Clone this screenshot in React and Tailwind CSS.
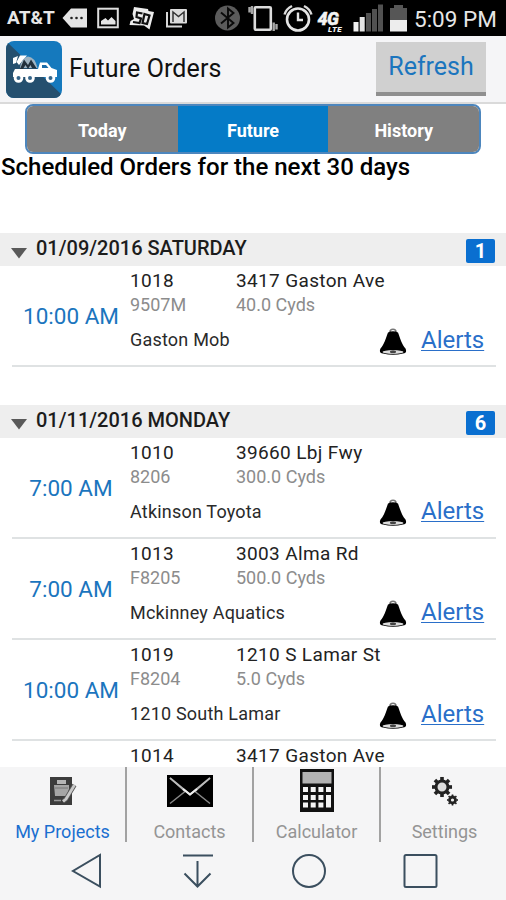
import React from 'react';

const groups = [
  {
    title: '01/09/2016 SATURDAY',
    count: 1,
    orders: [
      { id: '1018', time: '10:00 AM', address: '3417 Gaston Ave', code: '9507M', qty: '40.0 Cyds', customer: 'Gaston Mob' },
    ],
  },
  {
    title: '01/11/2016 MONDAY',
    count: 6,
    orders: [
      { id: '1010', time: '7:00 AM', address: '39660 Lbj Fwy', code: '8206', qty: '300.0 Cyds', customer: 'Atkinson Toyota' },
      { id: '1013', time: '7:00 AM', address: '3003 Alma Rd', code: 'F8205', qty: '500.0 Cyds', customer: 'Mckinney Aquatics' },
      { id: '1019', time: '10:00 AM', address: '1210 S Lamar St', code: 'F8204', qty: '5.0 Cyds', customer: '1210 South Lamar' },
      { id: '1014', address: '3417 Gaston Ave' },
    ],
  },
];

const StatusIcons = () => (
  <svg className="shrink-0" width="405" height="36" viewBox="62 0 405 36">
    {/* tag */}
    <path d="M62.500 18 L71 8.500 H87 V27.500 H71 Z" fill="#e4e4e4" />
    <g fill="#222">
      <circle cx="71.500" cy="18" r="1.300" />
      <circle cx="76.500" cy="18" r="1.300" />
      <circle cx="81.500" cy="18" r="1.300" />
    </g>
    {/* picture */}
    <rect x="98.200" y="8.700" width="19.600" height="18.600" fill="none" stroke="#dedede" strokeWidth="2" />
    <path d="M101 24.500 V21 L105.500 18 L108 20.500 L111.500 17 L115.500 21 V24.500 Z" fill="#e4e4e4" />
    {/* app badge */}
    <path d="M134 7 L148 9 L148.500 11 L154 12 L149.500 29.500 L144 25.500 L129.500 25 L130.500 21 L134 19 L132.500 14 Z" fill="#ececec" />
    <path d="M142.500 13.500 L137 12.500 L136.500 17 L141 18.500 L139.500 23 L133 22" fill="none" stroke="#111" strokeWidth="2.200" />
    <path d="M144.500 14 L149.500 15.500 L147 24 L142.500 23 Z" fill="none" stroke="#111" strokeWidth="2.200" />
    {/* mail stack */}
    <path d="M167 12 V26.500 H182" fill="none" stroke="#d8d8d8" strokeWidth="2" />
    <rect x="170" y="9" width="17" height="14.500" rx="1" fill="#dcdcdc" />
    <path d="M173 22 V12 L178.500 16.500 L184 12 V22" fill="none" stroke="#333" strokeWidth="1.500" />
    {/* bluetooth */}
    <circle cx="227.500" cy="18" r="12.500" fill="#5b5b5b" />
    <path d="M221 12.500 L233.500 23 L228 27.500 V8.500 L233.500 13 L221 23.500" fill="none" stroke="#0a0a0a" strokeWidth="1.900" />
    {/* vibrate */}
    <rect x="254.800" y="7.200" width="16" height="22.600" rx="1" fill="none" stroke="#dcdcdc" strokeWidth="2.600" />
    <path d="M249.500 7 V12.500 M252 6 V14 M273.700 22.500 V31 M276.500 24 V29.500" stroke="#a8a8a8" strokeWidth="2.400" />
    {/* alarm */}
    <circle cx="298" cy="19.500" r="11" fill="none" stroke="#e4e4e4" strokeWidth="2.600" />
    <path d="M298 12.500 V20 H303" fill="none" stroke="#e4e4e4" strokeWidth="2.400" />
    <path d="M284.500 14.500 Q286 9 292 6 M311.500 14.500 Q310 9 304 6" fill="none" stroke="#dcdcdc" strokeWidth="2.400" />
    {/* network */}
    <text x="317.500" y="25" fontSize="18" fontWeight="900" fontStyle="italic" letterSpacing="-0.500" fill="#f4f4f4" stroke="#f4f4f4" strokeWidth="0.400">4G</text>
    <text x="328" y="32" fontSize="8" fontWeight="900" fontStyle="italic" letterSpacing="0.500" fill="#f4f4f4" stroke="#000" strokeWidth="1.500" paintOrder="stroke">LTE</text>
    {/* signal */}
    <rect x="353.500" y="22" width="5" height="9.500" fill="#f0f0f0" />
    <rect x="359.700" y="17" width="5" height="14.500" fill="#e4e4e4" />
    <rect x="366" y="13" width="5" height="18.500" fill="#515151" />
    <rect x="372" y="9" width="5" height="22.500" fill="#515151" />
    <rect x="378" y="4.500" width="5" height="27" fill="#515151" />
    {/* battery */}
    <path d="M394 5 H403 V8 H407 V20 H390 V8 H394 Z" fill="#565656" />
    <rect x="390" y="20" width="17" height="11.500" fill="#ededed" />
  </svg>
);

const AppLogo = () => (
  <svg className="shrink-0" width="56" height="57" viewBox="0 0 56 57">
    <defs>
      <clipPath id="logo"><rect width="56" height="57" rx="8" /></clipPath>
    </defs>
    <g clipPath="url(#logo)">
      <rect width="56" height="57" fill="#1579bd" />
      <path d="M0 0 L56 54 V57 H0 Z" fill="#25506f" />
    </g>
    {/* chute and drum */}
    <path d="M7 17 L12 15 L10 22 L7 23 Z M14 14.500 H21 L13 24 L10.500 21 Z" fill="#fff" />
    <path d="M14 27 Q15 17 22 15.500 Q29 16 31.500 27 Z" fill="#9fb4c3" />
    <path d="M14 28 L18 18.500 L22 24 L25 18.500 L31 28 L26 27 L24.500 24 L22 28 L19.500 24 L17 28 Z" fill="#22303c" />
    {/* chassis and cab */}
    <path d="M9 28 H32 L34 21.500 H41 L45.500 27 L51 29 V36 H7 V32 Z" fill="#fff" />
    <path d="M36 27 V24 H40 L42.500 27 Z" fill="#1a6ca8" />
    <g fill="#35658a" stroke="#fff" strokeWidth="2.800">
      <circle cx="12.500" cy="37" r="3.400" />
      <circle cx="24" cy="37" r="3.400" />
      <circle cx="44.500" cy="37" r="3.400" />
    </g>
  </svg>
);

const Bell = () => (
  <svg className="mt-1" width="28" height="28" viewBox="0 0 28 28">
    <path d="M11 4 Q11 1.200 14 1.200 Q17 1.200 17 4" fill="none" stroke="#777" strokeWidth="1.600" />
    <path d="M9 4.500 Q14 1.800 19 4.500 C21 10 23 17 26.500 20.500 Q28.500 25 24 25.500 Q14 28 4 25.500 Q-0.500 25 1.500 20.500 C5 17 7 10 9 4.500 Z" fill="#000" />
    <ellipse cx="14" cy="24" rx="10.500" ry="1.900" fill="#ddd" />
    <ellipse cx="14" cy="23.800" rx="3" ry="1.500" fill="#444" />
  </svg>
);

const OrderRow = ({ order }) => (
  <div className="ml-3 mr-2.5 flex h-[101.200px] shrink-0 border-b-2 border-[#dfe2e3]">
    <div className="flex w-[118px] shrink-0 items-center justify-center pt-px text-[22.500px] leading-none text-[#1b75be]">
      {order.time}
    </div>
    <div className="min-w-0 flex-1">
      <div className="flex text-[19px] leading-[29px] tracking-[0.350px] text-[#222]">
        <span className="w-[106px]">{order.id}</span>
        <span>{order.address}</span>
      </div>
      {order.customer && (
        <>
          <div className="flex text-[18px] leading-5 text-[#8c8c8c]">
            <span className="w-[106px]">{order.code}</span>
            <span>{order.qty}</span>
          </div>
          <div className="flex h-[49px] items-center">
            <span className="w-[249px] text-[18px] tracking-[0.200px] text-[#2a2a2a]">{order.customer}</span>
            <Bell />
            <a className="ml-3.5 text-[24px] leading-none text-[#2a6fc9] underline decoration-1 underline-offset-2">Alerts</a>
          </div>
        </>
      )}
    </div>
  </div>
);

const OrderGroup = ({ group }) => (
  <section className="flex shrink-0 flex-col">
    <div className="flex h-[33px] items-center bg-[#eeeeee] pl-[11px] pr-[11px]">
      <svg className="mt-[7px]" width="16" height="11" viewBox="0 0 16 11">
        <path d="M0 0 H16 L8 10.500 Z" fill="#595959" />
      </svg>
      <h2 className="-mt-[3px] ml-[9px] flex-1 text-[20px] font-medium text-[#1c1c1c]">{group.title}</h2>
      <span className="mt-[3px] flex h-6 w-[29px] items-center justify-center rounded-xs bg-[#0a6fd0] text-[20px] font-bold text-white">
        {group.count}
      </span>
    </div>
    {group.orders.map((o) => <OrderRow key={o.id} order={o} />)}
  </section>
);

const ProjectsIcon = () => (
  <svg width="28" height="30" viewBox="0 0 28 30">
    <rect x="1" y="1" width="22" height="28" fill="#3c3c3c" />
    <rect x="8" y="4" width="9" height="4" fill="#b5b5b5" />
    <path d="M5 9 H20 V13 L18 20 H6 Z" fill="#a5a5a5" />
    <path d="M6 12 H19" stroke="#777" />
    <path d="M5 24.500 H12" stroke="#999" strokeWidth="1.500" />
    <path d="M25.500 9 L17 23 L14 25.500" fill="none" stroke="#555" strokeWidth="4.500" />
    <path d="M25.500 9 L17 23 L14 25.500" fill="none" stroke="#c9c9c9" strokeWidth="2.800" />
  </svg>
);

const MailIcon = () => (
  <svg width="46" height="32" viewBox="0 0 46 32">
    <rect width="46" height="32" fill="#000" />
    <path d="M3 3 L18 16.500 L3 28.500 M43 3 L28 16.500 L43 28.500" fill="none" stroke="#888" strokeWidth="1.500" />
    <path d="M3 3 L23 19.500 L43 3" fill="none" stroke="#bbb" strokeWidth="1.800" />
    <path d="M16 14 L23 19.500 L30 14" fill="none" stroke="#eee" strokeWidth="2" />
  </svg>
);

const CalcIcon = () => (
  <svg width="34" height="43" viewBox="0 0 34 43">
    <rect width="34" height="43" fill="#111" />
    <rect x="2.500" y="3" width="29" height="11.500" fill="#b3b3b3" />
    <g fill="#f4f4f4">
      {[18, 26, 33.5].map((y) =>
        [3, 10.7, 18.4].map((x) => <rect key={`${x}-${y}`} x={x} y={y} width="5" height="5" />)
      )}
      <rect x="26" y="18" width="5" height="5" />
      <rect x="26" y="26" width="5" height="12.500" />
    </g>
  </svg>
);

const teeth = [0, 45, 90, 135, 180, 225, 270, 315];

const Gear = ({ cx, cy, r, w, tooth, fill }) => (
  <g transform={`translate(${cx} ${cy})`}>
    {teeth.map((a) => (
      <rect key={a} x={-tooth / 2} y={-r - tooth * 0.7} width={tooth} height={tooth} fill="#222" transform={`rotate(${a})`} />
    ))}
    <circle r={r - w / 2} fill={fill} stroke="#222" strokeWidth={w} />
  </g>
);

const GearsIcon = () => (
  <svg width="26" height="30" viewBox="0 0 26 30">
    <Gear cx={10} cy={11} r={7.5} w={3} tooth={3.6} fill="#ddd" />
    <Gear cx={20.5} cy={24} r={4.4} w={2.8} tooth={1.6} fill="#eee" />
  </svg>
);

const tabs = [
  { label: 'My Projects', icon: <ProjectsIcon />, active: true },
  { label: 'Contacts', icon: <MailIcon /> },
  { label: 'Calculator', icon: <CalcIcon /> },
  { label: 'Settings', icon: <GearsIcon /> },
];

const App = () => (
  <div className="flex h-[900px] w-[506px] flex-col overflow-hidden bg-white font-['Roboto',sans-serif] text-black">
    {/* Status bar */}
    <div className="flex h-9 shrink-0 items-center bg-black text-[#e6e6e6]">
      <span className="w-[62px] shrink-0 whitespace-nowrap pl-[7px] pt-px text-[19px] font-bold">AT&amp;T</span>
      <div className="w-[352px] shrink-0 overflow-hidden"><StatusIcons /></div>
      <span className="whitespace-nowrap pt-1 text-[22.500px]">5:09 PM</span>
    </div>

    {/* Title bar */}
    <header className="flex h-[68px] shrink-0 items-center border-b-2 border-[#dadada] bg-[#f5f5f7] pl-1.5 pr-5">
      <AppLogo />
      <h1 className="ml-[7px] flex-1 text-[25px] tracking-[0.100px] text-[#111]">Future Orders</h1>
      <button className="flex h-[54px] w-[110px] items-center justify-center border-b-4 border-[#8f8f8f] bg-[#d0d0d0] text-[25px] text-[#1b75be]">
        Refresh
      </button>
    </header>

    {/* Segments */}
    <div className="ml-[25px] mr-[25px] flex h-[50px] shrink-0 overflow-hidden rounded-lg border-2 border-[#4d86bd] text-[18px] font-bold text-white">
      <div className="flex flex-1 items-center justify-center bg-[#808080] pt-0.5">Today</div>
      <div className="flex flex-1 items-center justify-center bg-[#057bc7] pt-0.5">Future</div>
      <div className="flex flex-1 items-center justify-center bg-[#808080] pt-0.5">History</div>
    </div>

    <main className="flex min-h-0 flex-1 flex-col overflow-hidden">
      <p className="h-[79px] shrink-0 pl-px text-[24px] font-medium leading-[26px]">Scheduled Orders for the next 30 days</p>
      <div className="flex flex-col gap-[37.500px]">
        {groups.map((g) => <OrderGroup key={g.title} group={g} />)}
      </div>
    </main>

    {/* Tabs */}
    <nav className="flex h-20 shrink-0 bg-[#f5f5f6]">
      {tabs.map((t, i) => (
        <div key={t.label} className="flex w-[127px] shrink-0">
          <div className="flex flex-1 flex-col items-center">
            <div className="flex h-[47px] shrink-0 items-center">{t.icon}</div>
            <span className={t.active ? 'mt-1 text-[18px] leading-7 text-[#1a6fd0]' : 'mt-1 text-[18px] leading-7 text-[#949494]'}>{t.label}</span>
          </div>
          {i < tabs.length - 1 && <div className="h-[75px] w-0.5 bg-[#a2a2a2]" />}
        </div>
      ))}
    </nav>

    {/* System navigation */}
    <div className="flex h-[53px] shrink-0 items-start bg-[#f5f5f6]">
      <svg width="506" height="53" viewBox="0 847 506 53" fill="none" stroke="#3b4f5f" strokeWidth="2">
        <path d="M100 855 V886.500 L73 871 Z" />
        <path d="M183 855.500 H213 M197.500 861 V886 M184.500 873.500 L197.500 886.500 L210.500 873.500" />
        <circle cx="309" cy="871" r="16" />
        <rect x="404.500" y="855" width="32" height="32" rx="1.500" />
      </svg>
    </div>
  </div>
);

export default App;
